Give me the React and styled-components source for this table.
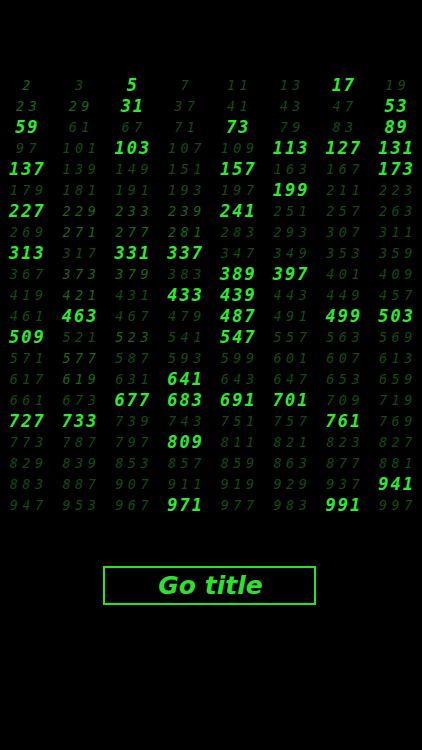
import React from "react";
import styled, { createGlobalStyle } from "styled-components";

const GlobalStyle = createGlobalStyle`
  html, body {
    margin: 0;
    padding: 0;
    background: #000;
  }
`;

const Screen = styled.div`
  width: 422px;
  height: 750px;
  background: #000;
  display: flex;
  flex-direction: column;
  align-items: center;
  padding-top: 75px;
  box-sizing: border-box;
  font-family: "DejaVu Sans Mono", "Liberation Mono", monospace;
`;

const Grid = styled.div`
  width: 100%;
  display: grid;
  grid-template-columns: repeat(8, 1fr);
  grid-auto-rows: 21px;
`;

// bright primes are bold and tight, dim ones are thin and spaced out
const Cell = styled.div`
  display: flex;
  align-items: center;
  justify-content: center;
  font-style: italic;
  line-height: 1;
  white-space: nowrap;
  font-weight: ${({ $level }) => ($level === "b" ? 700 : 400)};
  font-size: ${({ $level }) => ($level === "b" ? "17px" : "13.5px")};
  letter-spacing: ${({ $level }) => ($level === "b" ? "2px" : "4.5px")};
  padding-left: ${({ $level }) => ($level === "b" ? "2px" : "4.5px")};
  color: ${({ $level }) =>
    $level === "b" ? "#30ea30" : $level === "m" ? "#1d641d" : "#154915"};
`;

const TitleButton = styled.button`
  margin-top: 50px;
  margin-right: 3px;
  width: 213px;
  height: 39px;
  box-sizing: border-box;
  background: #000;
  border: 2px solid #22e622;
  color: #2fe02f;
  font-family: "DejaVu Sans", "Liberation Sans", sans-serif;
  font-weight: 700;
  font-style: italic;
  font-size: 25px;
  padding: 0 0 0 2px;
  display: flex;
  align-items: center;
  justify-content: center;
  cursor: pointer;
`;

const bright = new Set([
  5, 17, 31, 53, 59, 73, 89, 103, 113, 127, 131, 137, 157, 173, 199, 227,
  241, 313, 331, 337, 389, 397, 433, 439, 463, 487, 499, 503, 509, 547, 641,
  677, 683, 691, 701, 727, 733, 761, 809, 941, 971, 991,
]);

const mid = new Set([
  2, 23, 29, 229, 233, 239, 271, 277, 281, 373, 379, 421, 523, 577, 619,
]);

function primes(limit) {
  const out = [];
  for (let n = 2; n < limit; n++) {
    let ok = true;
    for (let d = 2; d * d <= n; d++) {
      if (n % d === 0) {
        ok = false;
        break;
      }
    }
    if (ok) out.push(n);
  }
  return out;
}

const list = primes(1000);

export default function App() {
  return (
    <>
      <GlobalStyle />
      <Screen>
        <Grid>
          {list.map((p) => (
            <Cell key={p} $level={bright.has(p) ? "b" : mid.has(p) ? "m" : "d"}>
              {p}
            </Cell>
          ))}
        </Grid>
        <TitleButton>Go title</TitleButton>
      </Screen>
    </>
  );
}
